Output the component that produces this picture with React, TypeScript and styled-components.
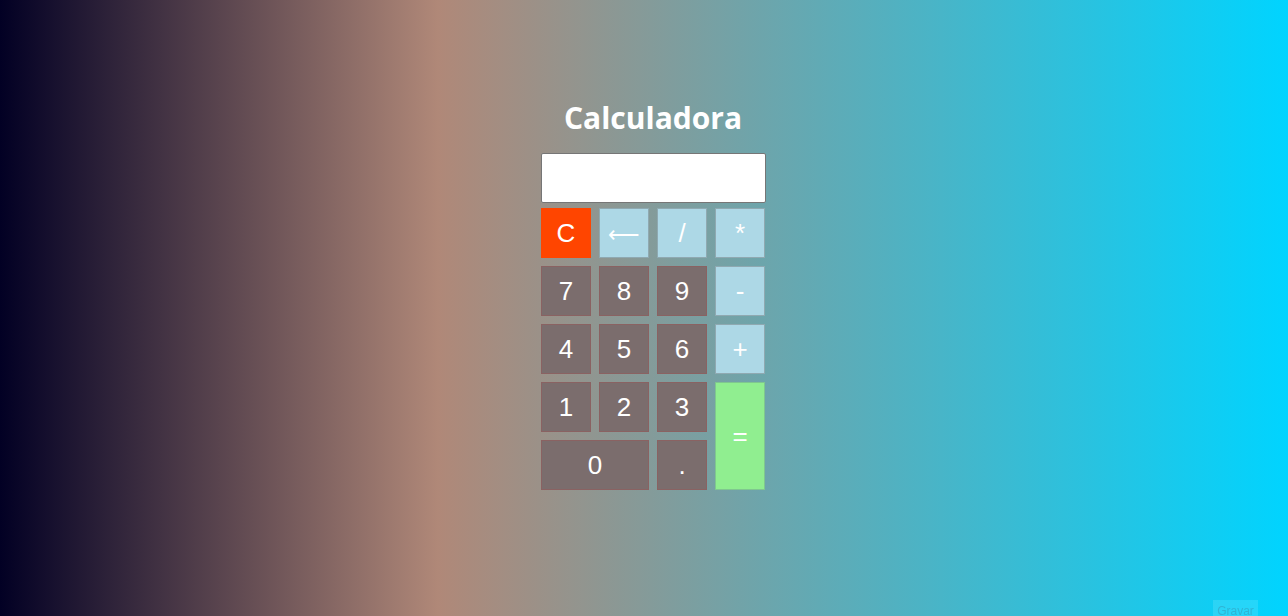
import React from "react";
import styled, { createGlobalStyle } from "styled-components";

const Global = createGlobalStyle`
  html, body { margin: 0; padding: 0; height: 100%; }
  body {
    background: linear-gradient(90deg, #020024 0%, #b08878 34%, #00d4ff 100%);
    font-family: "Liberation Sans", Arial, sans-serif;
    overflow: hidden;
  }
  #root { height: 100%; }
`;

const Page = styled.main`
  height: 100%;
  display: flex;
  flex-direction: column;
  align-items: center;
  padding: 98px 0 0 18px;
  box-sizing: border-box;
`;

const Title = styled.h1`
  margin: 0 0 15px;
  font-family: "Open Sans", sans-serif;
  font-weight: 700;
  font-size: 30px;
  line-height: 40px;
  color: #ffffff;
`;

const Display = styled.input`
  box-sizing: border-box;
  width: 225px;
  height: 50px;
  margin: 0 0 5px;
  border: 1px solid #767676;
  border-radius: 2px;
  background: #ffffff;
  padding: 0 8px;
  font-size: 24px;
  font-family: "Liberation Sans", Arial, sans-serif;
  text-align: right;
`;

const Keys = styled.div`
  display: grid;
  grid-template-columns: repeat(4, 50px);
  grid-auto-rows: 50px;
  gap: 8px;
`;

type Kind = "digit" | "op" | "clear" | "equal";

const colors: Record<Kind, { bg: string; border: string }> = {
  digit: { bg: "#7b6d6d", border: "#8a6262" },
  op: { bg: "#add8e6", border: "#8fa9b1" },
  clear: { bg: "#ff4500", border: "#ff4500" },
  equal: { bg: "#90ee90", border: "#7fc78f" },
};

const Key = styled.button<{ $kind: Kind; $col?: number; $row?: number }>`
  box-sizing: border-box;
  margin: 0;
  padding: 0;
  background: ${(p) => colors[p.$kind].bg};
  border: 1px solid ${(p) => colors[p.$kind].border};
  color: #ffffff;
  font-family: "Liberation Sans", Arial, sans-serif;
  font-size: 26px;
  cursor: pointer;
  grid-column: ${(p) => (p.$col ? `span ${p.$col}` : "auto")};
  grid-row: ${(p) => (p.$row ? `span ${p.$row}` : "auto")};
`;

const Arrow = styled.span`
  font-family: "DejaVu Sans", sans-serif;
  font-size: 22px;
  font-weight: 300;
`;

const Record = styled.button`
  position: fixed;
  right: 30px;
  bottom: -6px;
  width: 45px;
  height: 22px;
  padding: 0;
  border: none;
  background: rgba(255, 255, 255, 0.12);
  color: rgba(60, 120, 150, 0.35);
  font-family: "Liberation Sans", Arial, sans-serif;
  font-size: 12px;
`;

export default function App() {
  return (
    <>
      <Global />
      <Page>
        <Title>Calculadora</Title>
        <Display readOnly value="" />
        <Keys>
          <Key $kind="clear">C</Key>
          <Key $kind="op"><Arrow>⟵</Arrow></Key>
          <Key $kind="op">/</Key>
          <Key $kind="op">*</Key>
          <Key $kind="digit">7</Key>
          <Key $kind="digit">8</Key>
          <Key $kind="digit">9</Key>
          <Key $kind="op">-</Key>
          <Key $kind="digit">4</Key>
          <Key $kind="digit">5</Key>
          <Key $kind="digit">6</Key>
          <Key $kind="op">+</Key>
          <Key $kind="digit">1</Key>
          <Key $kind="digit">2</Key>
          <Key $kind="digit">3</Key>
          <Key $kind="equal" $row={2}>=</Key>
          <Key $kind="digit" $col={2}>0</Key>
          <Key $kind="digit">.</Key>
        </Keys>
      </Page>
      <Record>Gravar</Record>
    </>
  );
}
